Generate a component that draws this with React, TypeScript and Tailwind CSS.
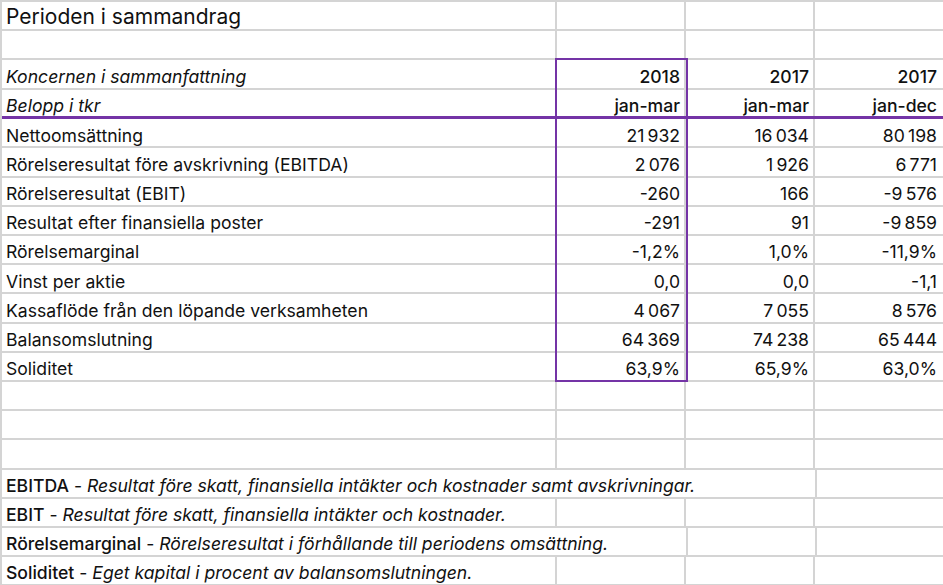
const rows = [
  ['Nettoomsättning', '21\u2009932', '16\u2009034', '80\u2009198'],
  ['Rörelseresultat före avskrivning (EBITDA)', '2\u2009076', '1\u2009926', '6\u2009771'],
  ['Rörelseresultat (EBIT)', '-260', '166', '-9\u2009576'],
  ['Resultat efter finansiella poster', '-291', '91', '-9\u2009859'],
  ['Rörelsemarginal', '-1,2%', '1,0%', '-11,9%'],
  ['Vinst per aktie', '0,0', '0,0', '-1,1'],
  ['Kassaflöde från den löpande verksamheten', '4\u2009067', '7\u2009055', '8\u2009576'],
  ['Balansomslutning', '64\u2009369', '74\u2009238', '65\u2009444'],
  ['Soliditet', '63,9%', '65,9%', '63,0%'],
]

// footer: term, description, how many columns the text spills over
const notes = [
  { term: 'EBITDA', text: 'Resultat före skatt, finansiella intäkter och kostnader samt avskrivningar.', span: 3 },
  { term: 'EBIT', text: 'Resultat före skatt, finansiella intäkter och kostnader.', span: 1 },
  { term: 'Rörelsemarginal', text: 'Rörelseresultat i förhållande till periodens omsättning.', span: 2 },
  { term: 'Soliditet', text: 'Eget kapital i procent av balansomslutningen.', span: 1 },
]

const row = 'flex h-[29.2px] border-b-2 border-[#d4d4d4]'
const c1 = 'w-[555px] shrink-0 border-r-2 border-[#d4d4d4] px-[4px] pt-[6px] flex items-center whitespace-nowrap'
const cn = 'w-[129px] shrink-0 border-r-2 border-[#d4d4d4] pr-[4px] pt-[6px] flex items-center justify-end whitespace-nowrap'
const cl = 'w-[127px] shrink-0 pr-[5px] pt-[6px] flex items-center justify-end whitespace-nowrap'

function Empty() {
  return (
    <div className={row}>
      <div className={c1} />
      <div className={cn} />
      <div className={cn} />
      <div className={cl} />
    </div>
  )
}

export default function App() {
  return (
    <div className="w-[943px] h-[585px] overflow-hidden bg-white text-[#111] text-[17.6px] font-['Inter',sans-serif]">
      <div className="relative border-t-2 border-l-2 border-[#d4d4d4] w-[943px]">
        {/* Title */}
        <div className={row}>
          <div className={`${c1} text-[21px] !pt-[2px]`}>Perioden i sammandrag</div>
          <div className={cn} />
          <div className={cn} />
          <div className={cl} />
        </div>
        <Empty />

        {/* Header */}
        <div className={row}>
          <div className={`${c1} italic`}>Koncernen i sammanfattning</div>
          <div className={`${cn} font-medium`}>2018</div>
          <div className={`${cn} font-medium`}>2017</div>
          <div className={`${cl} font-medium`}>2017</div>
        </div>
        <div className="flex h-[29.7px] border-b-[3px] border-[#7434a6]">
          <div className={`${c1} italic`}>Belopp i tkr</div>
          <div className={`${cn} font-medium`}>jan-mar</div>
          <div className={`${cn} font-medium`}>jan-mar</div>
          <div className={`${cl} font-medium`}>jan-dec</div>
        </div>

        {/* Data */}
        {rows.map(([label, a, b, c]) => (
          <div key={label} className={row}>
            <div className={c1}>{label}</div>
            <div className={cn}>{a}</div>
            <div className={cn}>{b}</div>
            <div className={cl}>{c}</div>
          </div>
        ))}

        <Empty />
        <Empty />
        <Empty />

        {/* Definitions */}
        {notes.map((n) => (
          <div key={n.term} className={row}>
            <div
              className={`${n.span === 1 ? 'w-[555px]' : n.span === 2 ? 'w-[686px]' : 'w-[815px]'} shrink-0 border-r-2 border-[#d4d4d4] px-[4px] pt-[6px] flex items-center whitespace-nowrap`}
            >
              <span className="font-medium">{n.term}</span>
              <span>&nbsp;-&nbsp;</span>
              <span className="italic">{n.text}</span>
            </div>
            {n.span === 1 && <div className={cn} />}
            {n.span <= 2 && <div className={cn} />}
            <div className={cl} />
          </div>
        ))}

        {/* selected range */}
        <div className="absolute left-[553px] top-[56px] w-[133px] h-[324px] border-2 border-[#7434a6] pointer-events-none" />
      </div>
    </div>
  )
}
